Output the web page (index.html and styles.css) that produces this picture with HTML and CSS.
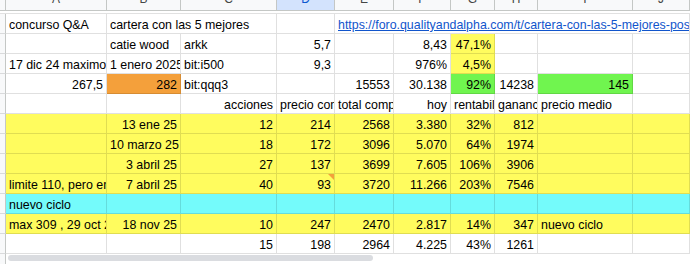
FILE: index.html
```html
<!DOCTYPE html>
<html lang="es">
<head>
<meta charset="utf-8">
<title>cartera</title>
<link rel="stylesheet" href="styles.css">
</head>
<body>
<div class="sheet">
  <div class="hdr">
    <div class="hc stub"></div>
    <div class="hc"><span>A</span></div>
    <div class="hc"><span>B</span></div>
    <div class="hc"><span>C</span></div>
    <div class="hc sel"><span>D</span></div>
    <div class="hc"><span>E</span></div>
    <div class="hc"><span>F</span></div>
    <div class="hc"><span>G</span></div>
    <div class="hc"><span>H</span></div>
    <div class="hc"><span>I</span></div>
    <div class="hc"><span>J</span></div>
  </div>
  <div class="body">
    <div class="row">
      <div class="c stub"></div>
      <div class="c">concurso Q&amp;A</div>
      <div class="c s2">cartera con las 5 mejores</div>
      <div class="c"></div>
      <div class="c s6"><a class="link" href="#">https://foro.qualityandalpha.com/t/cartera-con-las-5-mejores-posiciones-2025</a></div>
    </div>
    <div class="row">
      <div class="c stub"></div>
      <div class="c"></div>
      <div class="c">catie wood</div>
      <div class="c">arkk</div>
      <div class="c r">5,7</div>
      <div class="c"></div>
      <div class="c r">8,43</div>
      <div class="c r yel">47,1%</div>
      <div class="c"></div>
      <div class="c"></div>
      <div class="c"></div>
    </div>
    <div class="row">
      <div class="c stub"></div>
      <div class="c">17 dic 24 maximo</div>
      <div class="c">1 enero 2025</div>
      <div class="c">bit:i500</div>
      <div class="c r">9,3</div>
      <div class="c"></div>
      <div class="c r">976%</div>
      <div class="c r yel">4,5%</div>
      <div class="c"></div>
      <div class="c"></div>
      <div class="c"></div>
    </div>
    <div class="row">
      <div class="c stub"></div>
      <div class="c r">267,5</div>
      <div class="c r org">282</div>
      <div class="c">bit:qqq3</div>
      <div class="c"></div>
      <div class="c r">15553</div>
      <div class="c r">30.138</div>
      <div class="c r grn">92%</div>
      <div class="c r">14238</div>
      <div class="c r grn">145</div>
      <div class="c"></div>
    </div>
    <div class="row">
      <div class="c stub"></div>
      <div class="c"></div>
      <div class="c"></div>
      <div class="c r">acciones</div>
      <div class="c">precio compra</div>
      <div class="c">total compra</div>
      <div class="c r">hoy</div>
      <div class="c">rentabilidad</div>
      <div class="c">ganancia</div>
      <div class="c">precio medio</div>
      <div class="c"></div>
    </div>
    <div class="row yrow">
      <div class="c stub"></div>
      <div class="c"></div>
      <div class="c r">13 ene 25</div>
      <div class="c r">12</div>
      <div class="c r">214</div>
      <div class="c r">2568</div>
      <div class="c r">3.380</div>
      <div class="c r">32%</div>
      <div class="c r">812</div>
      <div class="c"></div>
      <div class="c"></div>
    </div>
    <div class="row yrow">
      <div class="c stub"></div>
      <div class="c"></div>
      <div class="c r">10 marzo 25</div>
      <div class="c r">18</div>
      <div class="c r">172</div>
      <div class="c r">3096</div>
      <div class="c r">5.070</div>
      <div class="c r">64%</div>
      <div class="c r">1974</div>
      <div class="c"></div>
      <div class="c"></div>
    </div>
    <div class="row yrow">
      <div class="c stub"></div>
      <div class="c"></div>
      <div class="c r">3 abril 25</div>
      <div class="c r">27</div>
      <div class="c r">137</div>
      <div class="c r">3699</div>
      <div class="c r">7.605</div>
      <div class="c r">106%</div>
      <div class="c r">3906</div>
      <div class="c"></div>
      <div class="c"></div>
    </div>
    <div class="row yrow">
      <div class="c stub"></div>
      <div class="c">limite 110, pero en marzo</div>
      <div class="c r">7 abril 25</div>
      <div class="c r">40</div>
      <div class="c r note">93</div>
      <div class="c r">3720</div>
      <div class="c r">11.266</div>
      <div class="c r">203%</div>
      <div class="c r">7546</div>
      <div class="c"></div>
      <div class="c"></div>
    </div>
    <div class="row crow">
      <div class="c stub"></div>
      <div class="c">nuevo ciclo</div>
      <div class="c"></div>
      <div class="c"></div>
      <div class="c"></div>
      <div class="c"></div>
      <div class="c"></div>
      <div class="c"></div>
      <div class="c"></div>
      <div class="c"></div>
      <div class="c"></div>
    </div>
    <div class="row yrow">
      <div class="c stub"></div>
      <div class="c">max 309 , 29 oct 25</div>
      <div class="c r">18 nov 25</div>
      <div class="c r">10</div>
      <div class="c r">247</div>
      <div class="c r">2470</div>
      <div class="c r">2.817</div>
      <div class="c r">14%</div>
      <div class="c r">347</div>
      <div class="c">nuevo ciclo</div>
      <div class="c"></div>
    </div>
    <div class="row">
      <div class="c stub"></div>
      <div class="c"></div>
      <div class="c"></div>
      <div class="c r">15</div>
      <div class="c r">198</div>
      <div class="c r">2964</div>
      <div class="c r">4.225</div>
      <div class="c r">43%</div>
      <div class="c r">1261</div>
      <div class="c"></div>
      <div class="c"></div>
    </div>
  </div>
  <div class="hscroll">
    <div class="sstub"></div>
    <div class="track"><div class="thumb"></div></div>
  </div>
</div>
</body>
</html>
```
FILE: styles.css
```css
html, body {
  margin: 0;
  padding: 0;
  background: #fff;
}
body {
  width: 690px;
  height: 264px;
  overflow: hidden;
  font-family: "Liberation Sans", Arial, sans-serif;
  font-size: 12.4px;
  color: #000;
}
.sheet {
  display: flex;
  flex-direction: column;
  width: 690px;
}
.hdr, .row {
  display: grid;
  grid-template-columns: 6px 101px 74px 96px 58px 59px 57px 44px 43px 95px 57px;
}
.hdr {
  height: 11px;
  box-sizing: border-box;
  border-bottom: 1px solid #c4c7c5;
  margin-bottom: 2px;
}
.hc {
  background: #f8f9fa;
  border-right: 1px solid #c4c7c5;
  text-align: center;
  overflow: hidden;
  color: #444746;
  font-size: 12px;
}
.hc span {
  display: block;
  line-height: 14px;
  margin-top: -8px;
}
.hc.sel {
  background: #d3e3fd;
  color: #0b57d0;
}
.body {
  border-top: 1px solid #e1e1e1;
}
.row {
  height: 20px;
}
.c {
  box-sizing: border-box;
  border-right: 1px solid rgba(0, 0, 0, 0.12);
  border-bottom: 1px solid rgba(0, 0, 0, 0.12);
  padding: 5px 3px 0 3px;
  line-height: 13px;
  white-space: nowrap;
  overflow: hidden;
}
.c.stub, .hc.stub {
  background: #f8f9fa;
  border-right: 1px solid #c4c7c5;
  padding: 0;
}
.r { text-align: right; }
.s2 { grid-column: span 2; }
.s6 { grid-column: span 6; }
.link {
  color: #1155cc;
  text-decoration: underline;
}
.yrow, .yel { background: #fffc5e; }
.crow { background: #74fbfb; }
.org { background: #f4a03b; }
.grn { background: #70f54f; }
.note { position: relative; }
.note::after {
  content: "";
  position: absolute;
  top: 0;
  right: 0;
  width: 0;
  height: 0;
  border-style: solid;
  border-width: 0 6px 6px 0;
  border-color: transparent #f4a03b transparent transparent;
}
.hscroll {
  display: grid;
  grid-template-columns: 6px 1fr;
  height: 10px;
}
.sstub {
  background: #f8f9fa;
  border-right: 1px solid #c4c7c5;
  box-sizing: border-box;
}
.track {
  padding: 1px 0 0 2px;
}
.thumb {
  width: 365px;
  height: 6px;
  border-radius: 3px;
  background: #dadce0;
}
```
